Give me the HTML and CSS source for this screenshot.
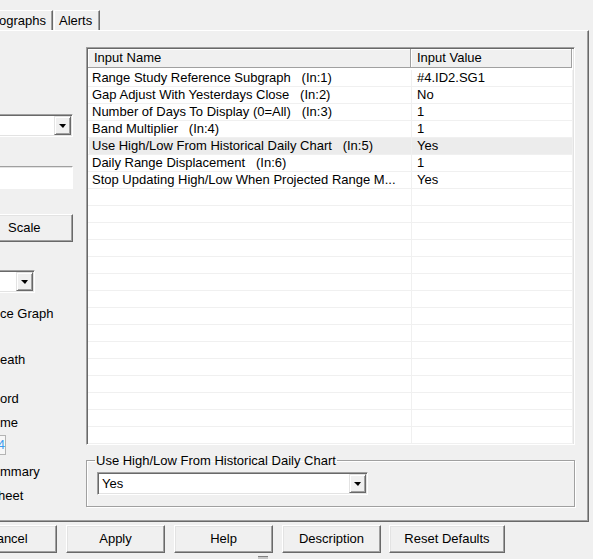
FILE: index.html
```html
<!DOCTYPE html>
<html>
<head>
<meta charset="utf-8">
<link rel="stylesheet" href="styles.css">
</head>
<body>
<div class="window">
  <div class="tabs">
    <div class="tab tab-cut">ographs</div>
    <div class="tab">Alerts</div>
  </div>
  <div class="panel">
    <div class="left">
      <div class="combo combo-a"><div class="field"></div><div class="dd-btn"><span class="arrow"></span></div></div>
      <div class="textbox"></div>
      <div class="btn btn-scale">Scale</div>
      <div class="combo combo-b"><div class="field"></div><div class="dd-btn"><span class="arrow"></span></div></div>
      <div class="lbl l1">ce Graph</div>
      <div class="lbl l2">eath</div>
      <div class="lbl l3">ord</div>
      <div class="lbl l4">me</div>
      <div class="spin">4</div>
      <div class="lbl l5">mmary</div>
      <div class="lbl l6 cut">heet</div>
    </div>
    <div class="right">
      <div class="list">
        <div class="list-head">
          <div class="hcell hc1">Input Name</div>
          <div class="hcell hc2">Input Value</div>
        </div>
        <div class="rows">
          <div class="row"><div class="cell c1">Range Study Reference Subgraph   (In:1)</div><div class="cell c2">#4.ID2.SG1</div></div>
          <div class="row"><div class="cell c1">Gap Adjust With Yesterdays Close   (In:2)</div><div class="cell c2">No</div></div>
          <div class="row"><div class="cell c1">Number of Days To Display (0=All)   (In:3)</div><div class="cell c2">1</div></div>
          <div class="row"><div class="cell c1">Band Multiplier   (In:4)</div><div class="cell c2">1</div></div>
          <div class="row selected"><div class="cell c1">Use High/Low From Historical Daily Chart   (In:5)</div><div class="cell c2">Yes</div></div>
          <div class="row"><div class="cell c1">Daily Range Displacement   (In:6)</div><div class="cell c2">1</div></div>
          <div class="row"><div class="cell c1">Stop Updating High/Low When Projected Range M...</div><div class="cell c2">Yes</div></div>
          <div class="row"><div class="cell c1"></div><div class="cell c2"></div></div>
          <div class="row"><div class="cell c1"></div><div class="cell c2"></div></div>
          <div class="row"><div class="cell c1"></div><div class="cell c2"></div></div>
          <div class="row"><div class="cell c1"></div><div class="cell c2"></div></div>
          <div class="row"><div class="cell c1"></div><div class="cell c2"></div></div>
          <div class="row"><div class="cell c1"></div><div class="cell c2"></div></div>
          <div class="row"><div class="cell c1"></div><div class="cell c2"></div></div>
          <div class="row"><div class="cell c1"></div><div class="cell c2"></div></div>
          <div class="row"><div class="cell c1"></div><div class="cell c2"></div></div>
          <div class="row"><div class="cell c1"></div><div class="cell c2"></div></div>
          <div class="row"><div class="cell c1"></div><div class="cell c2"></div></div>
          <div class="row"><div class="cell c1"></div><div class="cell c2"></div></div>
          <div class="row"><div class="cell c1"></div><div class="cell c2"></div></div>
          <div class="row"><div class="cell c1"></div><div class="cell c2"></div></div>
          <div class="row"><div class="cell c1"></div><div class="cell c2"></div></div>
        </div>
      </div>
      <fieldset class="group">
        <legend>Use High/Low From Historical Daily Chart</legend>
        <div class="combo combo-c"><div class="field">Yes</div><div class="dd-btn"><span class="arrow"></span></div></div>
      </fieldset>
    </div>
  </div>
  <div class="buttons">
    <div class="btn btn-cancel">Cancel</div>
    <div class="btn">Apply</div>
    <div class="btn">Help</div>
    <div class="btn">Description</div>
    <div class="btn btn-reset">Reset Defaults</div>
  </div>
  <div class="grip-row"><div class="grip"></div></div>
</div>
</body>
</html>
```
FILE: styles.css
```css
html, body {
  margin: 0;
  padding: 0;
  background: #f0f0f0;
}
body {
  width: 593px;
  height: 559px;
  overflow: hidden;
  font-family: "Liberation Sans", Arial, sans-serif;
  font-size: 13px;
  line-height: 16px;
  color: #000;
}
.window {
  width: 593px;
  height: 559px;
}

/* Tabs */
.tabs {
  height: 30px;
  display: flex;
  align-items: flex-end;
  gap: 1px;
}
.tab {
  height: 19px;
  line-height: 19px;
  border-top: 1px solid #fff;
  border-left: 1px solid #fff;
  border-right: 1px solid #696969;
  box-shadow: inset -1px 0 0 #a0a0a0;
  padding: 0 7px 0 4px;
}
.tab-cut {
  border-left: none;
  margin-left: -1px;
  padding: 0 6px 0 0;
}

/* Panel */
.panel {
  width: 588px;
  height: 489px;
  border-top: 1px solid #fff;
  border-right: 1px solid #696969;
  border-bottom: 1px solid #696969;
  box-shadow: inset -1px -1px 0 #a0a0a0;
  padding-bottom: 1px;
  display: flex;
  align-items: flex-start;
}
.left {
  width: 93px;
  margin-left: -20px;
  display: flex;
  flex-direction: column;
  align-items: flex-start;
}
.right {
  width: 489px;
  margin-left: 13px;
  padding-top: 16px;
  display: flex;
  flex-direction: column;
}

/* Sunken controls */
.combo {
  display: flex;
  height: 19px;
  padding: 1px;
  background: #fff;
  border-top: 1px solid #a0a0a0;
  border-left: 1px solid #a0a0a0;
  border-right: 1px solid #fff;
  border-bottom: 1px solid #fff;
  box-shadow: inset 1px 1px 0 #696969, inset -1px -1px 0 #e3e3e3;
  box-sizing: content-box;
}
.combo .field {
  flex: 1;
  line-height: 19px;
  padding-left: 3px;
}
.dd-btn {
  width: 15px;
  height: 17px;
  background: #f0f0f0;
  border-top: 1px solid #e3e3e3;
  border-left: 1px solid #e3e3e3;
  border-right: 1px solid #696969;
  border-bottom: 1px solid #696969;
  box-shadow: inset 1px 1px 0 #fff, inset -1px -1px 0 #a0a0a0;
  display: flex;
  align-items: center;
  justify-content: center;
}
.arrow {
  width: 0;
  height: 0;
  border-left: 4px solid transparent;
  border-right: 3px solid transparent;
  border-top: 4px solid #000;
  margin-top: 1px;
}
.combo-a {
  width: 89px;
  margin-top: 83px;
}
.textbox {
  width: 93px;
  height: 23px;
  margin-top: 29px;
  box-sizing: border-box;
  background: #fff;
  border-top: 1px solid #a0a0a0;
  border-left: 1px solid #a0a0a0;
  border-right: 1px solid #fff;
  border-bottom: 1px solid #fff;
  box-shadow: inset 1px 1px 0 #e3e3e3;
}
.combo-b {
  width: 51px;
  margin-top: 28px;
}

/* Buttons */
.btn {
  box-sizing: border-box;
  height: 28px;
  width: 99px;
  line-height: 26px;
  text-align: center;
  background: #f0f0f0;
  border-top: 1px solid #fff;
  border-left: 1px solid #fff;
  border-right: 1px solid #696969;
  border-bottom: 1px solid #696969;
  box-shadow: inset -1px -1px 0 #a0a0a0, inset 1px 1px 0 #e3e3e3;
  flex: none;
}
.btn-scale {
  width: 93px;
  margin-top: 25px;
  text-align: left;
  text-indent: 27px;
}

/* Left labels */
.lbl {
  padding-left: 20px;
  white-space: nowrap;
}
.l1 { margin-top: 13px; }
.l2 { margin-top: 30px; }
.l3 { margin-top: 23px; }
.l4 { margin-top: 8px; }
.l5 { margin-top: 9px; }
.l6 { margin-top: 8px; }
.cut { padding-left: 18px; }
.spin {
  margin-top: 4px;
  width: 24px;
  height: 18px;
  line-height: 18px;
  box-sizing: content-box;
  border: 1px solid #b4b4b4;
  background: #f7f7f7;
  color: #3c9cf0;
  text-align: right;
}

/* List */
.list {
  box-sizing: border-box;
  height: 398px;
  width: 489px;
  background: #fff;
  border-top: 1px solid #a0a0a0;
  border-left: 1px solid #a0a0a0;
  border-right: 1px solid #fff;
  border-bottom: 1px solid #fff;
  box-shadow: inset 1px 1px 0 #696969, inset -1px -1px 0 #e3e3e3;
  padding: 1px;
  overflow: hidden;
}
.list-head {
  display: flex;
  height: 19px;
  margin-bottom: 2px;
}
.hcell {
  box-sizing: border-box;
  height: 19px;
  line-height: 18px;
  background: #f0f0f0;
  border-right: 1px solid #a0a0a0;
  border-bottom: 1px solid #a0a0a0;
  box-shadow: inset 1px 1px 0 #fff;
  padding-left: 6px;
}
.hc1 { width: 323px; }
.hc2 { width: 161px; }
.rows {
  display: flex;
  flex-direction: column;
}
.row {
  display: flex;
  height: 17px;
  flex: none;
}
.cell {
  box-sizing: border-box;
  height: 17px;
  line-height: 16px;
  border-right: 1px solid #f0f0f0;
  border-bottom: 1px solid #f0f0f0;
  white-space: pre;
  overflow: hidden;
}
.c1 { width: 324px; padding-left: 4px; }
.c2 { width: 161px; padding-left: 5px; }
.row.selected .cell {
  background: #ececec;
}
.row.selected .c1 {
  box-shadow: inset 1px 0 0 #fff;
}

/* Group box */
.group {
  margin: 8px 0 0 0;
  padding: 4px 10px 11px 10px;
  border: 1px solid #a0a0a0;
  box-shadow: 1px 1px 0 #fff, inset 1px 1px 0 #fff;
  width: 489px;
  box-sizing: border-box;
}
.group legend {
  padding: 0 1px;
  margin-left: -2px;
  line-height: 15px;
}
.combo-c {
  width: 267px;
}

/* Bottom buttons */
.buttons {
  display: flex;
  gap: 9px;
  margin-top: 3px;
  margin-left: -42px;
}
.btn-reset {
  width: 116px;
  margin-left: -1px;
}
.grip-row {
  display: flex;
  padding-left: 258px;
  margin-top: 3px;
}
.grip {
  width: 10px;
  height: 4px;
  background: #c8c8c8;
  border-top: 1px solid #808080;
}
```
